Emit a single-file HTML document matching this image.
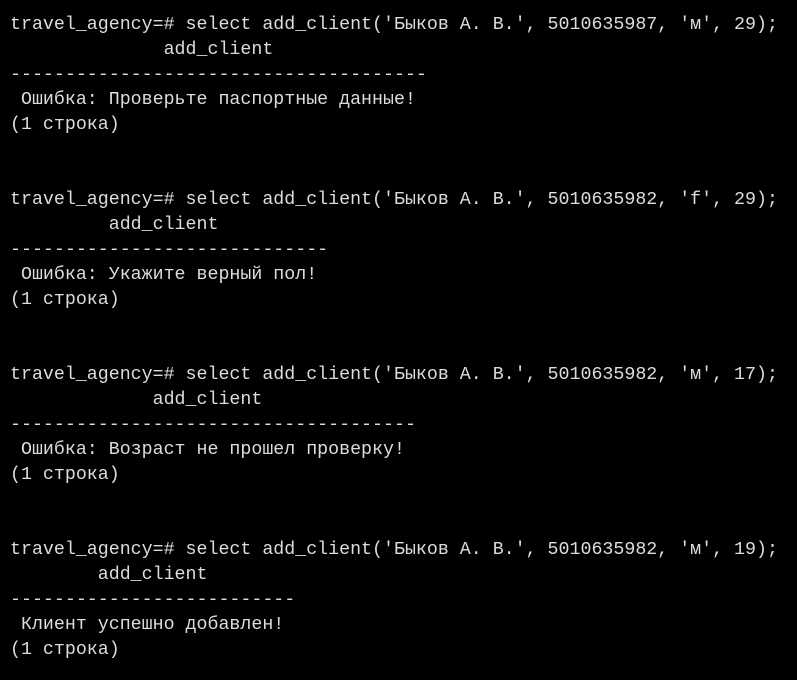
<!DOCTYPE html>
<html><head><meta charset="utf-8"><style>
html,body{margin:0;padding:0;background:#000;width:797px;height:680px;overflow:hidden}
pre{margin:0;position:absolute;left:10px;top:13px;font-family:"Liberation Mono","DejaVu Sans Mono",monospace;font-size:18.3px;line-height:25px;color:#dcdcdc;white-space:pre}
</style></head><body><pre>travel_agency=# select add_client('Быков А. В.', 5010635987, 'м', 29);
              add_client
--------------------------------------
 Ошибка: Проверьте паспортные данные!
(1 строка)


travel_agency=# select add_client('Быков А. В.', 5010635982, 'f', 29);
         add_client
-----------------------------
 Ошибка: Укажите верный пол!
(1 строка)


travel_agency=# select add_client('Быков А. В.', 5010635982, 'м', 17);
             add_client
-------------------------------------
 Ошибка: Возраст не прошел проверку!
(1 строка)


travel_agency=# select add_client('Быков А. В.', 5010635982, 'м', 19);
        add_client
--------------------------
 Клиент успешно добавлен!
(1 строка)</pre></body></html>
